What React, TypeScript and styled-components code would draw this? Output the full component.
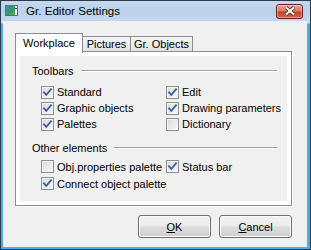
import styled, { createGlobalStyle } from 'styled-components';

const GlobalStyle = createGlobalStyle`
  html,
  body {
    margin: 0;
    padding: 0;
    background: #ffffff;
  }

  * {
    box-sizing: border-box;
  }
`;

type CheckItem = {
  label: string;
  checked: boolean;
};

const toolbars: CheckItem[] = [
  { label: 'Standard', checked: true },
  { label: 'Edit', checked: true },
  { label: 'Graphic objects', checked: true },
  { label: 'Drawing parameters', checked: true },
  { label: 'Palettes', checked: true },
  { label: 'Dictionary', checked: false },
];

const otherElements: CheckItem[] = [
  { label: 'Obj.properties palette', checked: false },
  { label: 'Status bar', checked: true },
  { label: 'Connect object palette', checked: true },
];

const tabs = [
  { label: 'Workplace', width: 68 },
  { label: 'Pictures', width: 49 },
  { label: 'Gr. Objects', width: 63 },
];

const WindowIcon = () => (
  <svg width='13' height='11' viewBox='0 0 13 11'>
    <defs>
      <linearGradient id='pic' x1='0' y1='0' x2='1' y2='1'>
        <stop offset='0' stopColor='#3f8fb8' />
        <stop offset='0.6' stopColor='#2f9a6a' />
        <stop offset='1' stopColor='#6fb04a' />
      </linearGradient>
    </defs>
    <rect x='0.5' y='0.5' width='12' height='10' fill='#f4f4f4' stroke='#6d6d6d' />
    <rect x='1' y='1' width='9' height='9' fill='url(#pic)' />
    <rect x='10' y='1' width='2' height='9' fill='#ffffff' />
    <rect x='10' y='3' width='2' height='1' fill='#444' />
  </svg>
);

const CheckMark = () => (
  <svg width='13' height='13' viewBox='0 0 13 13'>
    <polyline
      points='3,6.3 5.3,8.8 10,3.3'
      fill='none'
      stroke='#4260a8'
      strokeWidth='1.9'
      strokeLinecap='square'
    />
  </svg>
);

const Check = ({ label, checked }: CheckItem) => (
  <CheckLabel>
    <Box>{checked && <CheckMark />}</Box>
    <span>{label}</span>
  </CheckLabel>
);

const App = () => {
  return (
    <>
      <GlobalStyle />
      <Window>
        <TitleBar>
          <WindowIcon />
          <Title>Gr. Editor Settings</Title>
          <CloseBtn>
            <svg width='12' height='10' viewBox='0 0 12 10'>
              <path
                d='M2 1.5 L10 8.5 M10 1.5 L2 8.5'
                stroke='#5a1a1a'
                strokeWidth='3.6'
              />
              <path
                d='M2 1.5 L10 8.5 M10 1.5 L2 8.5'
                stroke='#ffffff'
                strokeWidth='2'
              />
            </svg>
          </CloseBtn>
        </TitleBar>

        <Client>
          <TabStrip>
            {tabs.map((tab, i) => (
              <Tab key={tab.label} $active={i === 0} $width={tab.width}>
                {tab.label}
              </Tab>
            ))}
          </TabStrip>

          <Panel>
            <PanelInner>
              <GroupHeader>
                <span>Toolbars</span>
                <Etch />
              </GroupHeader>
              <CheckGrid $rowHeight={16}>
                {toolbars.map((item) => (
                  <Check key={item.label} {...item} />
                ))}
              </CheckGrid>

              <GroupHeader $top={9}>
                <span>Other elements</span>
                <Etch />
              </GroupHeader>
              <CheckGrid $rowHeight={17} $top={3}>
                {otherElements.map((item) => (
                  <Check key={item.label} {...item} />
                ))}
              </CheckGrid>
            </PanelInner>
          </Panel>

          <ButtonRow>
            <Button>
              <u>O</u>K
            </Button>
            <Button>
              <u>C</u>ancel
            </Button>
          </ButtonRow>
        </Client>
      </Window>
    </>
  );
};

export default App;

const Window = styled.div`
  display: flex;
  flex-direction: column;

  width: 311px;
  height: 250px;
  padding: 0 3px 2px 2px;

  background: linear-gradient(180deg, #b9d1ea 0px, #cadcef 22px, #4aaee6 23px);
  border: 1px solid #2b3a4c;

  font-family: 'Liberation Sans', Arial, sans-serif;
  font-size: 11px;
  color: #000;
`;

const TitleBar = styled.div`
  display: flex;
  align-items: center;

  height: 21px;
  padding: 0 4px 1px 2px;
  background: linear-gradient(180deg, #c6daef 0%, #b9d1ea 50%, #c3d8ee 100%);
`;

const Title = styled.span`
  flex: 1;
  margin-left: 8px;
  font-size: 11.6px;
  color: #000;
`;

const CloseBtn = styled.div`
  display: flex;
  justify-content: center;
  align-items: center;

  width: 27px;
  height: 15px;
  margin-top: 1px;

  border: 1px solid #6b2020;
  border-radius: 3px;
  background: linear-gradient(180deg, #e7a59a 0%, #d77c6c 45%, #c2402a 55%, #cf6a52 100%);
  box-shadow: inset 0 0 0 1px rgba(255, 255, 255, 0.35);
`;

const Client = styled.div`
  display: flex;
  flex-direction: column;
  flex: 1;

  padding: 12px 15px 9px 12px;
  background: #f0f0f0;
`;

const TabStrip = styled.div`
  display: flex;
  align-items: flex-end;
  height: 19px;
  position: relative;
  z-index: 1;
`;

const Tab = styled.div<{ $active?: boolean; $width: number }>`
  display: flex;
  justify-content: center;
  align-items: center;

  width: ${({ $width }) => $width}px;
  height: ${({ $active }) => ($active ? 20 : 16)}px;
  margin-bottom: ${({ $active }) => ($active ? -1 : 0)}px;
  margin-left: -1px;
  padding-bottom: ${({ $active }) => ($active ? 1 : 0)}px;

  border: 1px solid #898c95;
  border-bottom: ${({ $active }) => ($active ? 'none' : '1px solid #898c95')};
  background: ${({ $active }) =>
    $active ? '#ffffff' : 'linear-gradient(180deg, #f4f4f4 0%, #eeeeee 50%, #e2e2e2 100%)'};
  z-index: ${({ $active }) => ($active ? 2 : 1)};

  &:first-child {
    margin-left: 0;
  }
`;

const Panel = styled.div`
  height: 155px;
  padding: 4px;
  margin-top: -1px;

  background: #ffffff;
  border: 1px solid #898c95;
  box-shadow: 1px 1px 0 #ffffff;
`;

const PanelInner = styled.div`
  height: 100%;
  padding: 8px 10px 0 12px;
  background: #f0f0f0;
`;

const GroupHeader = styled.div<{ $top?: number }>`
  display: flex;
  align-items: center;
  gap: 7px;

  height: 14px;
  margin-top: ${({ $top }) => $top ?? 0}px;
`;

const Etch = styled.div`
  flex: 1;
  height: 2px;
  border-top: 1px solid #a0a0a0;
  border-bottom: 1px solid #ffffff;
`;

const CheckGrid = styled.div<{ $rowHeight: number; $top?: number }>`
  display: grid;
  grid-template-columns: 125px 1fr;
  grid-auto-rows: ${({ $rowHeight }) => $rowHeight}px;

  margin-top: ${({ $top }) => $top ?? 6}px;
  padding-left: 9px;
`;

const CheckLabel = styled.label`
  display: flex;
  align-items: center;
  gap: 3px;
  white-space: nowrap;
`;

const Box = styled.span`
  display: block;
  width: 13px;
  height: 13px;

  border: 1px solid #8e8f8f;
  background: linear-gradient(135deg, #d8d8d8 0%, #eaeaea 50%, #f8f8f8 100%);
  box-shadow: inset 0 0 0 1px #f4f4f4;

  svg {
    display: block;
    margin: -1px;
  }
`;

const ButtonRow = styled.div`
  display: flex;
  justify-content: flex-end;
  gap: 8px;
  margin-top: 9px;
`;

const Button = styled.div`
  display: flex;
  justify-content: center;
  align-items: center;

  width: 73px;
  height: 23px;

  border: 1px solid #707070;
  border-radius: 3px;
  background: linear-gradient(180deg, #f2f2f2 0%, #ebebeb 48%, #dddddd 52%, #cfcfcf 100%);
  box-shadow: inset 0 0 0 1px #fcfcfc;
`;
